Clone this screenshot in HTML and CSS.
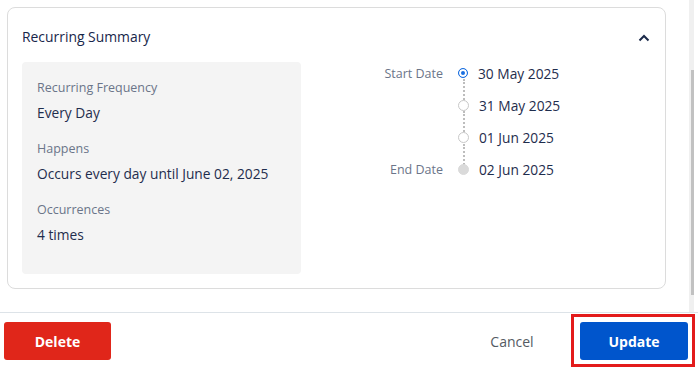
FILE: index.html
```html
<!DOCTYPE html>
<html lang="en">
<head>
    <meta charset="UTF-8">
    <meta name="viewport" content="width=device-width, initial-scale=1.0">
    <title>Recurring Summary</title>
    <link rel="stylesheet" href="styles.css">
</head>
<body>
    <div class="dialog">
        <div class="scroll-area">
            <div class="scroll-content">
                <div class="card">
                    <div class="card-header">
                        <h2>Recurring Summary</h2>
                        <svg class="chevron" width="16" height="16" viewBox="0 0 16 16">
                            <path d="M3.5 10.5 L8 6 L12.5 10.5" fill="none" stroke="#1b2a4a" stroke-width="2"/>
                        </svg>
                    </div>
                    <div class="card-body">
                        <!-- Summary box -->
                        <div class="summary">
                            <div class="summary-item">
                                <div class="summary-label">Recurring Frequency</div>
                                <div class="summary-value">Every Day</div>
                            </div>
                            <div class="summary-item">
                                <div class="summary-label">Happens</div>
                                <div class="summary-value">Occurs every day until June 02, 2025</div>
                            </div>
                            <div class="summary-item">
                                <div class="summary-label">Occurrences</div>
                                <div class="summary-value">4 times</div>
                            </div>
                        </div>

                        <!-- Timeline -->
                        <div class="timeline">
                            <div class="tl-row">
                                <span class="tl-label">Start Date</span>
                                <span class="tl-dot active"></span>
                                <span class="tl-date">30 May 2025</span>
                            </div>
                            <div class="tl-row">
                                <span class="tl-label"></span>
                                <span class="tl-dot"></span>
                                <span class="tl-date">31 May 2025</span>
                            </div>
                            <div class="tl-row">
                                <span class="tl-label"></span>
                                <span class="tl-dot"></span>
                                <span class="tl-date">01 Jun 2025</span>
                            </div>
                            <div class="tl-row last">
                                <span class="tl-label">End Date</span>
                                <span class="tl-dot end"></span>
                                <span class="tl-date">02 Jun 2025</span>
                            </div>
                        </div>
                    </div>
                </div>
            </div>
            <div class="scrollbar">
                <div class="scrollbar-thumb"></div>
            </div>
        </div>

        <div class="footer">
            <button type="button" class="btn btn-delete">Delete</button>
            <button type="button" class="btn btn-cancel">Cancel</button>
            <div class="highlight">
                <button type="button" class="btn btn-update">Update</button>
            </div>
        </div>
    </div>
</body>
</html>
```

FILE: styles.css
```css
body {
    font-family: "Open Sans", "Noto Sans", Arial, sans-serif;
    background-color: #ffffff;
    margin: 0;
    padding: 0;
    color: #1f2d4d;
}

.dialog {
    width: 698px;
    height: 369px;
    display: flex;
    flex-direction: column;
    overflow: hidden;
}

.scroll-area {
    display: flex;
    height: 312px;
}

.scroll-content {
    flex: 1;
    padding: 7px 23px 0 7px;
}

/* fake scrollbar (content is scrolled a little) */
.scrollbar {
    width: 5px;
    margin-right: 4px;
    background-color: #f0f0f0;
}

.scrollbar-thumb {
    margin-top: 70px;
    margin-left: 2px;
    width: 3px;
    height: 225px;
    background-color: #c1c1c1;
}

.card {
    border: 1px solid #dcdcdc;
    border-radius: 8px;
    padding: 0 13px 14px 14px;
}

.card-header {
    height: 54px;
    padding-top: 2px;
    box-sizing: border-box;
    display: flex;
    align-items: center;
    justify-content: space-between;
}

.card-header h2 {
    margin: 0;
    font-size: 13.9px;
    font-weight: 500;
    color: #17264a;
}

.chevron {
    margin-top: 3px;
}

.card-body {
    display: flex;
}

.summary {
    width: 279px;
    box-sizing: border-box;
    background-color: #f4f4f4;
    border-radius: 4px;
    padding: 17px 15px 30px;
}

.summary-item {
    margin-bottom: 18px;
}

.summary-item:last-child {
    margin-bottom: 0;
}

.summary-label {
    font-size: 12.5px;
    line-height: 18px;
    color: #6b7589;
    margin-bottom: 7px;
}

.summary-value {
    font-size: 13.75px;
    line-height: 18px;
    color: #1f2d4d;
}

.timeline {
    padding-left: 15px;
}

.tl-row {
    display: flex;
    align-items: center;
    height: 32.4px;
    position: relative;
}

.tl-row:first-child {
    height: 22px;
    margin-bottom: 5px;
}

.tl-label {
    width: 127px;
    text-align: right;
    font-size: 12.5px;
    color: #6b7589;
}

.tl-dot {
    width: 9px;
    height: 9px;
    margin: 0 10px 0 15px;
    border: 1px solid #c8c8c8;
    border-radius: 50%;
    background-color: #ffffff;
    flex-shrink: 0;
}

.tl-dot.active {
    width: 8px;
    height: 8px;
    border: 1.5px solid #1a6fe0;
    background-color: #1a6fe0;
    box-shadow: inset 0 0 0 2px #ffffff;
}

.tl-dot.end {
    border-color: #dadada;
    background-color: #dadada;
}

.tl-row .tl-dot::after {
    content: "";
    position: absolute;
    left: 146.5px;
    top: 50%;
    margin-top: 6px;
    height: 21px;
    border-left: 2px dotted #bdbdbd;
}

.tl-row.last .tl-dot::after {
    display: none;
}

.tl-date {
    font-size: 13.75px;
    color: #1f2d4d;
}

.footer {
    border-top: 1px solid #dde3e8;
    flex: 1;
    display: flex;
    align-items: flex-start;
    padding: 9px 3px 0 4px;
}

.btn {
    font-family: inherit;
    font-size: 14px;
    height: 38px;
    border: none;
    border-radius: 3px;
    cursor: pointer;
}

.btn-delete {
    width: 107px;
    background-color: #e0261a;
    color: #ffffff;
    font-weight: 700;
}

.btn-cancel {
    margin-left: auto;
    width: 80px;
    background: none;
    color: #555b63;
    margin-right: 19px;
}

.highlight {
    border: 3px solid #e31b1b;
    padding: 5px 4px 4px 6px;
    margin-top: -8px;
}

.btn-update {
    width: 108px;
    background-color: #0055cc;
    color: #ffffff;
    font-weight: 700;
}
```
